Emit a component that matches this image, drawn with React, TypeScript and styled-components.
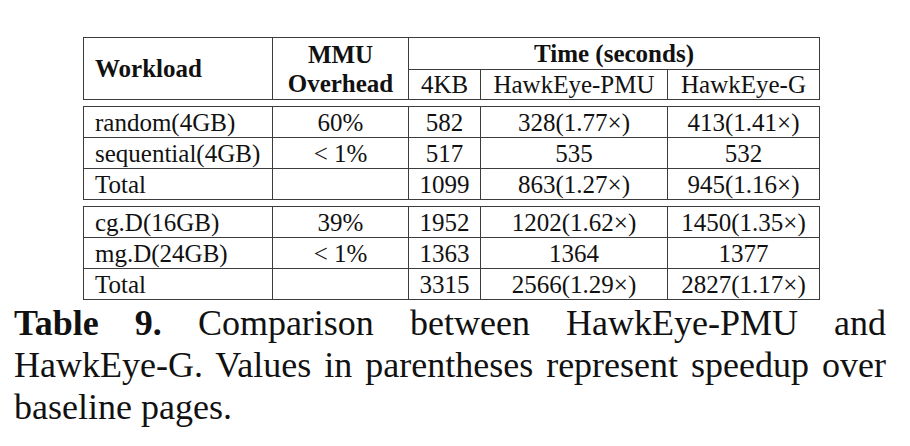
import React from "react";
import styled, { createGlobalStyle } from "styled-components";

const Global = createGlobalStyle`
  html, body { margin: 0; padding: 0; background: #ffffff; }
  body { font-family: "Liberation Serif", "DejaVu Serif", serif; color: #111; }
`;

const Page = styled.div`
  width: 910px;
  height: 446px;
  padding-top: 37px;
  box-sizing: border-box;
  display: flex;
  flex-direction: column;
  overflow: hidden;
`;

const TableStack = styled.div`
  margin-left: 83px;
  width: 736px;
  display: flex;
  flex-direction: column;
  gap: 6px;
`;

const Block = styled.table`
  width: 736px;
  border-collapse: collapse;
  table-layout: fixed;
  font-size: 25px;
  line-height: 29px;
`;

const Cell = styled.td<{ $align?: "left" | "center"; $bold?: boolean; $h?: number }>`
  border: 1px solid #3c3c3c;
  padding: 0;
  padding-left: ${(p) => (p.$align === "left" ? "11px" : "0")};
  text-align: ${(p) => p.$align ?? "center"};
  font-weight: ${(p) => (p.$bold ? 700 : 400)};
  height: ${(p) => p.$h ?? 30}px;
  white-space: nowrap;
  vertical-align: middle;
`;

const Caption = styled.p`
  margin: 2px 0 0 0;
  padding: 0 24px 0 14px;
  font-size: 36px;
  line-height: 42px;
  text-align: justify;
  color: #111;
`;

const Label = styled.b`
  font-weight: 700;
`;

const widths = [189, 136, 72, 187, 152];

const Cols = () => (
  <colgroup>
    {widths.map((w, i) => (
      <col key={i} style={{ width: w }} />
    ))}
  </colgroup>
);

type Row = [string, string, string, string, string];

const section1: Row[] = [
  ["random(4GB)", "60%", "582", "328(1.77×)", "413(1.41×)"],
  ["sequential(4GB)", "< 1%", "517", "535", "532"],
  ["Total", "", "1099", "863(1.27×)", "945(1.16×)"],
];

const section2: Row[] = [
  ["cg.D(16GB)", "39%", "1952", "1202(1.62×)", "1450(1.35×)"],
  ["mg.D(24GB)", "< 1%", "1363", "1364", "1377"],
  ["Total", "", "3315", "2566(1.29×)", "2827(1.17×)"],
];

const Body = ({ rows }: { rows: Row[] }) => (
  <Block>
    <Cols />
    <tbody>
      {rows.map((r, i) => (
        <tr key={i}>
          <Cell $align="left">{r[0]}</Cell>
          <Cell>{r[1]}</Cell>
          <Cell>{r[2]}</Cell>
          <Cell>{r[3]}</Cell>
          <Cell>{r[4]}</Cell>
        </tr>
      ))}
    </tbody>
  </Block>
);

export default function App() {
  return (
    <>
      <Global />
      <Page>
        <TableStack>
          <Block>
            <Cols />
            <tbody>
              <tr>
                <Cell $align="left" $bold rowSpan={2}>
                  Workload
                </Cell>
                <Cell $bold rowSpan={2}>
                  MMU
                  <br />
                  Overhead
                </Cell>
                <Cell $bold colSpan={3} $h={31}>
                  Time (seconds)
                </Cell>
              </tr>
              <tr>
                <Cell $h={29}>4KB</Cell>
                <Cell $h={29}>HawkEye-PMU</Cell>
                <Cell $h={29}>HawkEye-G</Cell>
              </tr>
            </tbody>
          </Block>
          <Body rows={section1} />
          <Body rows={section2} />
        </TableStack>
        <Caption>
          <Label>Table 9.</Label> Comparison between HawkEye-PMU and HawkEye-G. Values in
          parentheses represent speedup over baseline pages.
        </Caption>
      </Page>
    </>
  );
}
